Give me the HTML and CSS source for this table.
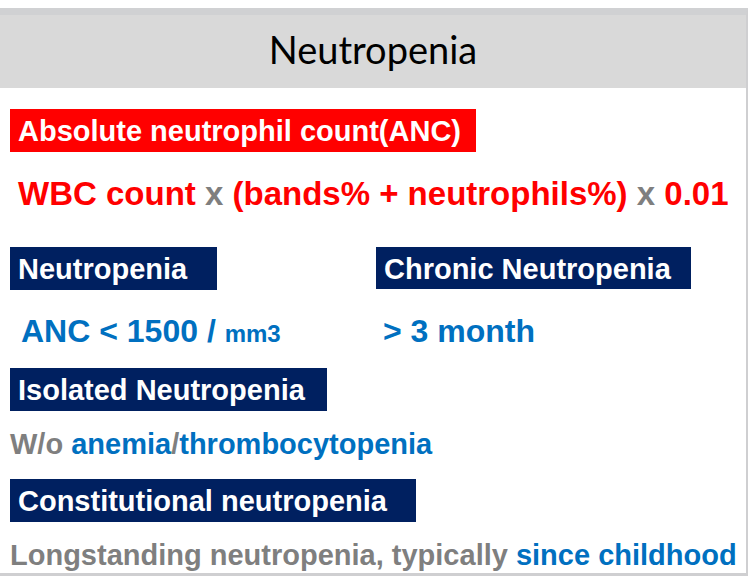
FILE: index.html
```html
<!DOCTYPE html>
<html lang="en">
<head>
<meta charset="utf-8">
<title>Neutropenia</title>
<link rel="stylesheet" href="styles.css">
</head>
<body>
<div class="card">
  <header class="title">Neutropenia</header>
  <main class="content">
    <div class="tag tag-red w-anc">Absolute neutrophil count(ANC)</div>
    <p class="formula"><span class="red">WBC count</span> <span class="gray">x</span> <span class="red">(bands% + neutrophils%)</span> <span class="gray">x</span> <span class="red">0.01</span></p>
    <div class="pair">
      <div class="tag tag-navy w-neu">Neutropenia</div>
      <div class="tag tag-navy tag-right w-chr">Chronic Neutropenia</div>
      <p class="value value-left">ANC &lt; 1500 / <span class="unit">mm3</span></p>
      <p class="value value-right">&gt; 3 month</p>
    </div>
    <div class="tag tag-navy w-iso">Isolated Neutropenia</div>
    <p class="line line-wo"><span class="gray">W/o</span> <span class="blue">anemia</span><span class="gray">/</span><span class="blue">thrombocytopenia</span></p>
    <div class="tag tag-navy w-con">Constitutional neutropenia</div>
    <p class="line line-long"><span class="gray">Longstanding neutropenia, typically</span> <span class="blue">since childhood</span></p>
  </main>
</div>
</body>
</html>
```
FILE: styles.css
```css
html, body {
  margin: 0;
  padding: 0;
  background: #ffffff;
}
body {
  padding-top: 8px;
  font-family: "Liberation Sans", Arial, sans-serif;
}
.card {
  width: 746px;
  height: 558px;
  border-top: 7px solid #d0d1d3;
  border-right: 2px solid #cfcfd1;
  border-bottom: 3px solid #cfcfd1;
  background: #ffffff;
  overflow: hidden;
}
.title {
  background: #d9d9d9;
  height: 73px;
  box-sizing: border-box;
  padding-bottom: 4px;
  line-height: 69px;
  text-align: center;
  font-family: Lato, "Open Sans", sans-serif;
  font-size: 38px;
  color: #000000;
}
.content {
  padding-left: 10px;
}
.tag {
  box-sizing: border-box;
  height: 43px;
  padding: 1px 0 0 8px;
  line-height: 42px;
  font-size: 29px;
  font-weight: bold;
  color: #ffffff;
  white-space: nowrap;
}
.tag-red {
  background: #ff0000;
  margin-top: 21px;
}
.tag-navy {
  background: #002060;
}
.w-anc { width: 466px; }
.w-neu { width: 207px; }
.w-chr { width: 315px; height: 42px; }
.w-iso { width: 317px; margin-top: 14px; }
.w-con { width: 406px; margin-top: 17px; }
.red { color: #ff0000; }
.gray { color: #7f7f7f; }
.blue { color: #0070c0; }
.formula {
  margin: 22px 0 0 8px;
  font-size: 33px;
  line-height: 40px;
  font-weight: bold;
  white-space: nowrap;
}
.pair {
  margin-top: 33px;
  display: grid;
  grid-template-columns: 366px 1fr;
  row-gap: 21px;
  align-items: baseline;
}
.value {
  margin: 0;
  line-height: 40px;
  font-weight: bold;
  color: #0070c0;
  white-space: nowrap;
}
.value-left {
  font-size: 32px;
  padding-left: 11px;
}
.value-right {
  font-size: 32px;
  padding-left: 7px;
}
.unit {
  font-size: 24px;
}
.line {
  margin: 15px 0 0 0;
  font-size: 29px;
  line-height: 36px;
  font-weight: bold;
  white-space: nowrap;
}
.line-long {
  margin-top: 15px;
}
```
